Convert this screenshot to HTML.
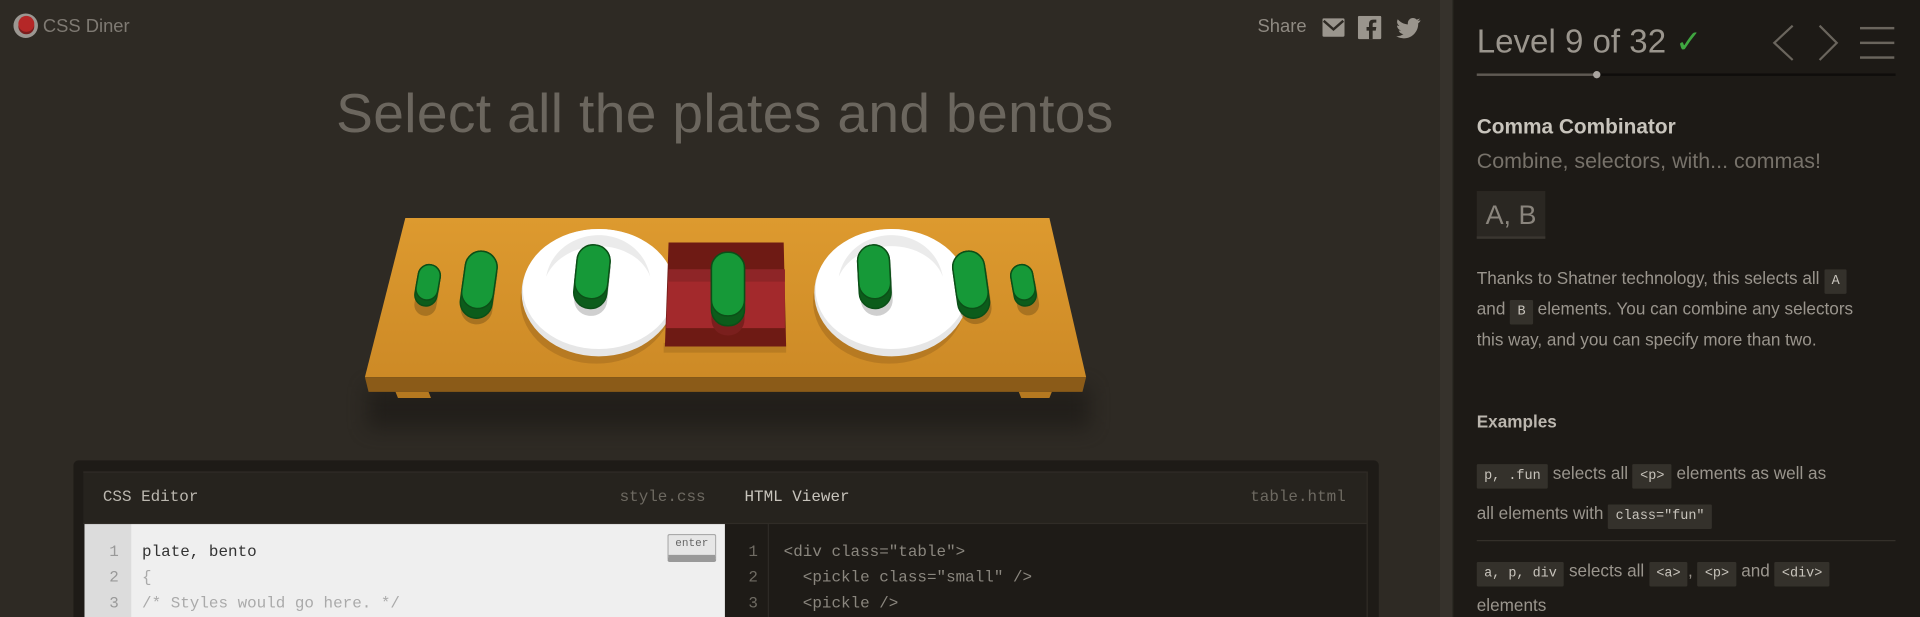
<!DOCTYPE html>
<html><head><meta charset="utf-8">
<style>
html,body{margin:0;padding:0;background:#2e2a24;overflow:hidden;width:1920px;height:617px}
#s{position:absolute;left:0;top:0;width:1568px;height:504px;overflow:hidden;transform:scale(1.2245);transform-origin:0 0;font-family:"Liberation Sans",sans-serif}
.a{position:absolute;white-space:nowrap}
.m{font-family:"Liberation Mono",monospace}
code{font-family:"Liberation Mono",monospace;font-size:11px;line-height:1;background:#34312b;color:#c8c4bc;padding:4px 6px;border-radius:1px}
</style></head><body>
<div id="s">
<div class="a" style="left:0;top:0;width:1176px;height:504px;background:#2e2a24"></div>
<div class="a" style="left:1176px;top:0;width:10px;height:504px;background:#36322c;border-right:1px solid #2a2722"></div>
<div class="a" style="left:1187px;top:0;width:381px;height:504px;background:#1d1a16"></div>

<div class="a" style="left:11px;top:11px;width:20px;height:20px;border-radius:50%;background:#9b9792"></div>
<div class="a" style="left:15px;top:13px;width:13px;height:13px;border-radius:50%;background:#b52727;box-shadow:0 2px 0 #7a1e1e"></div>
<div class="a" style="left:35px;top:13px;font-size:15px;color:#7f7a73">CSS Diner</div>

<div class="a" style="left:1027px;top:13px;font-size:15px;color:#8f8a82">Share</div>
<svg class="a" style="left:1080px;top:13px" width="82" height="20" viewBox="0 0 82 20">
<rect x="0" y="2" width="18" height="15" rx="1" fill="#9a958d"/><path d="M1 4l8 7 8-7" stroke="#2e2a24" stroke-width="2" fill="none"/>
<rect x="29" y="0" width="19" height="19" rx="1" fill="#9a958d"/><path d="M41 19v-7h2.5l.5-3h-3v-2c0-1 .3-1.5 1.5-1.5H44V3h-2.5C38.5 3 38 5 38 7v2h-2v3h2v7z" fill="#2e2a24"/>
<path d="M80 3.5c-.7.3-1.5.6-2.3.7.8-.5 1.5-1.3 1.8-2.2-.8.5-1.7.8-2.6 1-1.6-1.7-4.5-1.7-6 0-1 1-1.4 2.5-1.1 3.9C66.5 6.7 63.5 5.2 61.5 2.7c-1.1 1.9-.5 4.3 1.3 5.5-.6 0-1.3-.2-1.9-.5 0 2 1.4 3.7 3.3 4.1-.6.2-1.3.2-1.9.1.5 1.7 2.1 2.8 3.9 2.9-1.7 1.3-3.9 2-6.1 1.7 1.9 1.2 4.1 1.8 6.3 1.8 7.6 0 11.8-6.3 11.8-11.8v-.5c.8-.6 1.4-1.3 1.8-2.1z" fill="#9a958d"/>
</svg>

<div class="a" style="left:0;width:1184px;top:67px;text-align:center;font-size:45px;color:#6b665e;letter-spacing:.3px">Select all the plates and bentos</div>

<div class="a" style="left:300px;top:316px;width:590px;height:34px;background:#1f1c18;filter:blur(8px);opacity:.8"></div>
<svg class="a" style="left:0;top:0" width="1176" height="360" viewBox="0 0 1176 360">
<defs><linearGradient id="tg" x1="0" y1="0" x2="0" y2="1"><stop offset="0" stop-color="#dd9a2f"/><stop offset="1" stop-color="#cd8a26"/></linearGradient></defs>
<polygon points="331,178 857,178 887,308 298,308" fill="url(#tg)"/>
<polygon points="298,308 887,308 884,320 301,320" fill="#8b5b18"/>
<polygon points="323,320 350,320 352,325 325,325" fill="#b57920"/>
<polygon points="832,320 859,320 857,325 834,325" fill="#b57920"/>
<ellipse cx="487" cy="246" rx="62" ry="51" fill="#b77a22"/>
<ellipse cx="489" cy="239" rx="63" ry="52" fill="#e6e6e6"/>
<ellipse cx="489" cy="236" rx="62" ry="49" fill="#fff"/>
<path d="M446 226c4-22 24-34 43-34s38 12 42 34c-6-16-24-25-42-25s-36 9-43 25z" fill="#ebebeb"/>
<ellipse cx="726" cy="246" rx="62" ry="51" fill="#b77a22"/>
<ellipse cx="728" cy="239" rx="63" ry="52" fill="#e6e6e6"/>
<ellipse cx="728" cy="236" rx="62" ry="49" fill="#fff"/>
<path d="M685 226c4-22 24-34 43-34s38 12 42 34c-6-16-24-25-42-25s-36 9-43 25z" fill="#ebebeb"/>
<rect x="542" y="280" width="100" height="8" fill="#b97c22"/>
<polygon points="546,198 640,198 642,283 543,283" fill="#6e1a14"/>
<polygon points="546,220 641,220 641,268 544,268" fill="#a3292c"/>
<rect x="546" y="220" width="95" height="10" fill="#8e2527"/>
<g stroke="#0b4f17" stroke-width="1.2">
<g transform="rotate(10 349 234)"><rect x="341" y="224" width="18" height="34" rx="9" fill="#7d5518" stroke="none" opacity=".5"/><rect x="340" y="216" width="18" height="34" rx="9" fill="#0c5c1b"/><rect x="340" y="216" width="18" height="29" rx="9" fill="#169938"/></g>
<g transform="rotate(8 391 232)"><rect x="379" y="210" width="26" height="55" rx="13" fill="#7d5518" stroke="none" opacity=".5"/><rect x="378" y="205" width="26" height="55" rx="13" fill="#0c5c1b"/><rect x="378" y="205" width="26" height="47" rx="13" fill="#169938"/></g>
<g transform="rotate(6 484 225)"><rect x="471" y="205" width="27" height="53" rx="13" fill="#cfcfcf" stroke="none"/><rect x="470" y="200" width="27" height="52" rx="13" fill="#0c5c1b"/><rect x="470" y="200" width="27" height="44" rx="13" fill="#169938"/></g>
<rect x="581" y="212" width="27" height="62" rx="13" fill="#7a1f1d" stroke="none"/>
<rect x="581" y="206" width="27" height="60" rx="13" fill="#0c5c1b"/><rect x="581" y="206" width="27" height="52" rx="13" fill="#169938"/>
<g transform="rotate(-3 714 225)"><rect x="702" y="205" width="26" height="53" rx="13" fill="#cfcfcf" stroke="none"/><rect x="701" y="200" width="26" height="52" rx="13" fill="#0c5c1b"/><rect x="701" y="200" width="26" height="44" rx="13" fill="#169938"/></g>
<g transform="rotate(-8 793 232)"><rect x="781" y="210" width="26" height="55" rx="13" fill="#7d5518" stroke="none" opacity=".5"/><rect x="780" y="205" width="26" height="55" rx="13" fill="#0c5c1b"/><rect x="780" y="205" width="26" height="47" rx="13" fill="#169938"/></g>
<g transform="rotate(-10 836 234)"><rect x="828" y="224" width="18" height="34" rx="9" fill="#7d5518" stroke="none" opacity=".5"/><rect x="827" y="216" width="18" height="34" rx="9" fill="#0c5c1b"/><rect x="827" y="216" width="18" height="29" rx="9" fill="#169938"/></g>
</g>
</svg>

<div class="a" style="left:60px;top:376px;width:1066px;height:128px;background:#1e1b17;border-radius:4px 4px 0 0"></div>
<div class="a" style="left:68px;top:385px;width:1048px;height:43px;background:#26231e;border-top:1px solid #302c27;border-bottom:1px solid #302c27;box-sizing:border-box"></div>
<div class="a m" style="left:84px;top:398px;font-size:13px;color:#bcb8b0">CSS Editor</div>
<div class="a m" style="left:506px;top:398px;font-size:13px;color:#6d6961">style.css</div>
<div class="a m" style="left:608px;top:398px;font-size:13px;color:#c8c4bc">HTML Viewer</div>
<div class="a m" style="left:1021px;top:398px;font-size:13px;color:#6d6961">table.html</div>
<div class="a" style="left:1116px;top:385px;width:1px;height:119px;background:#302c27"></div>
<div class="a" style="left:69px;top:428px;width:38px;height:76px;background:#dcdcdc"></div>
<div class="a" style="left:107px;top:428px;width:485px;height:76px;background:#efefef"></div>
<div class="a m" style="left:69px;top:440px;width:28px;text-align:right;font-size:13px;line-height:21px;color:#999">1<br>2<br>3</div>
<div class="a m" style="left:116px;top:440px;font-size:13px;line-height:21px;color:#333">plate, bento<br><span style="color:#aaa">{</span><br><span style="color:#aaa">/* Styles would go here. */</span></div>
<div class="a m" style="left:545px;top:436px;width:40px;height:23px;box-sizing:border-box;background:#e6e6e6;border:1px solid #aaa;border-bottom:6px solid #999;border-radius:2px;font-size:9px;color:#666;text-align:center;line-height:14px">enter</div>
<div class="a" style="left:627px;top:428px;width:1px;height:76px;background:#2e2b26"></div>
<div class="a m" style="left:593px;top:440px;width:26px;text-align:right;font-size:13px;line-height:21px;color:#6f6b63">1<br>2<br>3</div>
<div class="a m" style="left:640px;top:440px;font-size:13px;line-height:21px;color:#8a867e;white-space:pre">&lt;div class="table"&gt;
  &lt;pickle class="small" /&gt;
  &lt;pickle /&gt;</div>

<div class="a" style="left:1206px;top:19px;font-size:27px;color:#9a958d">Level 9 of 32 <span style="color:#3fa640;font-size:26px">✓</span></div>
<svg class="a" style="left:1440px;top:18px" width="110" height="34" viewBox="0 0 110 34">
<path d="M24 3L9 17l15 14" stroke="#6a655d" stroke-width="1.8" fill="none"/>
<path d="M46 3l14 14-14 14" stroke="#6a655d" stroke-width="1.8" fill="none"/>
<rect x="79" y="4" width="28" height="2" fill="#6a655d"/><rect x="79" y="16" width="28" height="2" fill="#6a655d"/><rect x="79" y="28" width="28" height="2" fill="#6a655d"/>
</svg>
<div class="a" style="left:1206px;top:60px;width:98px;height:2px;background:#5f5a53"></div>
<div class="a" style="left:1304px;top:60px;width:244px;height:2px;background:#0f0d0b"></div>
<div class="a" style="left:1301px;top:58px;width:6px;height:6px;border-radius:50%;background:#aaa5a0"></div>

<div class="a" style="left:1206px;top:94px;font-size:17px;font-weight:bold;color:#c8c4bc">Comma Combinator</div>
<div class="a" style="left:1206px;top:121px;font-size:17.5px;color:#77726a">Combine, selectors, with... commas!</div>
<div class="a" style="left:1206px;top:156px;width:56px;height:39px;background:#2a2722;border-bottom:2px solid #3a3630;box-sizing:border-box;font-size:22px;color:#8a857d;text-align:center;line-height:40px">A, B</div>
<div class="a" style="left:1206px;top:215px;font-size:14px;line-height:25px;color:#9a958d">Thanks to Shatner technology, this selects all <code>A</code><br>and <code>B</code> elements. You can combine any selectors<br>this way, and you can specify more than two.</div>
<div class="a" style="left:1206px;top:336px;font-size:14px;font-weight:bold;color:#bbb6ae">Examples</div>
<div class="a" style="left:1206px;top:370px;font-size:14px;line-height:33px;color:#9a958d"><code>p, .fun</code> selects all <code>&lt;p&gt;</code> elements as well as<br>all elements with <code>class="fun"</code></div>
<div class="a" style="left:1206px;top:441px;width:342px;height:1px;background:#34302a"></div>
<div class="a" style="left:1206px;top:452px;font-size:14px;line-height:28px;color:#9a958d"><code>a, p, div</code> selects all <code>&lt;a&gt;</code>, <code>&lt;p&gt;</code> and <code>&lt;div&gt;</code><br>elements</div>
</div>
</body></html>
